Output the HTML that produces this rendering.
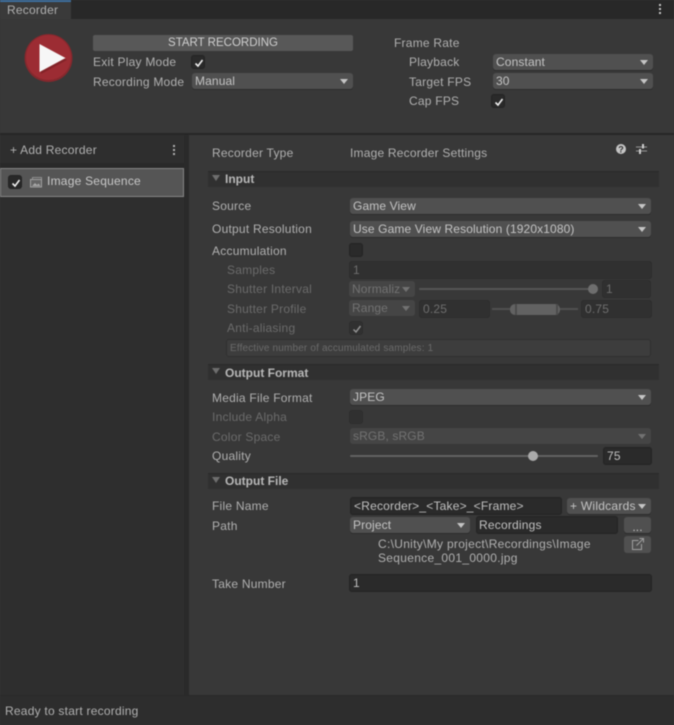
<!DOCTYPE html>
<html><head><meta charset="utf-8"><style>
*{box-sizing:border-box}
html,body{margin:0;padding:0;background:#383838}
#r{position:relative;width:674px;height:725px;overflow:hidden;background:#383838;font:12px "Liberation Sans",sans-serif;color:#b0b0b0;filter:blur(.4px)}
#r div,#r svg{position:absolute}
.t{white-space:nowrap;height:16px;line-height:16px;letter-spacing:.23px}
.d{color:#6b6b6b}
.dd{background:#505050;border-radius:3px;box-shadow:0 1px 0 #2c2c2c;height:16px;color:#c4c4c4;line-height:16px;padding-left:3px;letter-spacing:.12px;white-space:nowrap}
.dd:after{content:"";position:absolute;right:5px;top:6px;border:4px solid transparent;border-top:5px solid #c4c4c4;border-bottom:0}
.na:after{display:none}
.dis{background:#454545;color:#727272;box-shadow:none}
.dis:after{border-top-color:#727272}
.f{background:#2a2a2a;border:1px solid #232323;border-radius:3px;height:18px;line-height:17px;padding-left:3px;color:#c0c0c0;letter-spacing:.2px;white-space:nowrap}
.fd{background:#303030;border-color:#2d2d2d;color:#6e6e6e}
.c{width:14px;height:14px;background:#2a2a2a;border:1px solid #232323;border-radius:3px}
.cd{background:#303030;border-color:#2e2e2e}
.c svg{left:1px;top:1px}
.h{left:208px;width:451px;height:16px;background:#303030;border-top:1px solid #2a2a2a}
.b{font-weight:bold;color:#b8b8b8;letter-spacing:0}
.tri{width:0;height:0;border:4px solid transparent;border-top:6px solid #6e6e6e;border-bottom:0}
</style></head><body><div id="r">
<div style="left:0;top:0;width:674px;height:19px;background:#282828"></div>
<div style="left:0;top:0;width:71px;height:19px;background:#3a3a3a"></div>
<div style="left:0;top:0;width:71px;height:2px;background:#3d6f9f"></div>
<div class="t" style="left:7px;top:2px">Recorder</div>
<svg style="left:658px;top:3px" width="5" height="12"><g fill="#c4c4c4"><rect x="1" y="1" width="2" height="2"/><rect x="1" y="5" width="2" height="2"/><rect x="1" y="9" width="2" height="2"/></g></svg>

<svg style="left:20px;top:30px" width="56" height="56">
<circle cx="28.5" cy="28" r="24" fill="#85282d"/><circle cx="28.500" cy="27.500" r="22.500" fill="#9c2c33"/>
<path d="M21 16L47 30L21 44Z" fill="#7a1f24" opacity=".7"/><path d="M19.500 14L45.500 28L19.500 42Z" fill="#f6f6f6"/></svg>

<div style="left:93px;top:35px;width:260px;height:16px;background:#585858;border-radius:2px;color:#cfcfcf;text-align:center;line-height:17px;font-size:11.5px">START RECORDING</div>
<div class="t" style="left:93px;top:54px">Exit Play Mode</div>
<div class="c" style="left:191px;top:55px"><svg width="12" height="12"><path d="M2.500 6.500L5 9L9.500 3" stroke="#eee" stroke-width="1.600" fill="none"/></svg></div>
<div class="t" style="left:93px;top:74px">Recording Mode</div>
<div class="dd" style="left:192px;top:73px;width:161px">Manual</div>
<div class="t" style="left:394px;top:35px">Frame Rate</div>
<div class="t" style="left:409px;top:54px">Playback</div>
<div class="dd" style="left:493px;top:54px;width:160px">Constant</div>
<div class="t" style="left:409px;top:74px">Target FPS</div>
<div class="dd" style="left:493px;top:73px;width:160px">30</div>
<div class="t" style="left:409px;top:93px">Cap FPS</div>
<div class="c" style="left:491px;top:94px"><svg width="12" height="12"><path d="M2.500 6.500L5 9L9.500 3" stroke="#eee" stroke-width="1.600" fill="none"/></svg></div>

<div style="left:0;top:133px;width:674px;height:2px;background:#262626"></div>
<div style="left:0;top:135px;width:189px;height:562px;background:#2e2e2e"></div>
<div style="left:184px;top:135px;width:5px;height:562px;background:#2a2a2a"></div>
<div style="left:0;top:163px;width:184px;height:5px;background:#292929"></div>
<div class="t" style="left:10px;top:142px">+ Add Recorder</div>
<svg style="left:172px;top:144px" width="5" height="12"><g fill="#b0b0b0"><rect x="1" y="1" width="2" height="2"/><rect x="1" y="5" width="2" height="2"/><rect x="1" y="9" width="2" height="2"/></g></svg>
<div style="left:0;top:168px;width:184px;height:29px;background:#555;border:1px solid #858585"></div>
<div class="c" style="left:8px;top:175px;background:#282828"><svg width="12" height="12"><path d="M2.500 6.500L5 9L9.500 3" stroke="#eee" stroke-width="1.600" fill="none"/></svg></div>
<svg style="left:30px;top:176px" width="13" height="12"><rect x="2.500" y="1.500" width="9" height="7" fill="none" stroke="#909090"/><rect x=".5" y="3.500" width="11" height="7.500" fill="#666" stroke="#a0a0a0"/><path d="M2 10L5 7L7 9L8.500 7.500L10.500 10Z" fill="#a8a8a8"/></svg>
<div class="t" style="left:47px;top:173px;color:#c8c8c8">Image Sequence</div>

<div class="t" style="left:212px;top:145px">Recorder Type</div>
<div class="t" style="left:350px;top:145px;letter-spacing:.2px">Image Recorder Settings</div>
<svg style="left:615px;top:143px" width="12" height="12"><circle cx="6" cy="6" r="5" fill="#c4c4c4"/><text x="6" y="9.500" text-anchor="middle" font-size="9" font-weight="bold" font-family="Liberation Sans" fill="#333">?</text></svg>
<svg style="left:636px;top:143px" width="12" height="12"><path d="M0 4H11M0 8H11" stroke="#999" stroke-width="1"/><rect x="6" y="1" width="2" height="4.500" fill="#ccc"/><rect x="3" y="6" width="2" height="5" fill="#ccc"/></svg>

<div class="h" style="top:171px"></div>
<div class="tri" style="left:212px;top:175px"></div>
<div class="t b" style="left:225px;top:171px">Input</div>

<div class="t" style="left:212px;top:198px">Source</div>
<div class="dd" style="left:350px;top:198px;width:301px">Game View</div>
<div class="t" style="left:212px;top:221px">Output Resolution</div>
<div class="dd" style="left:350px;top:221px;width:301px">Use Game View Resolution (1920x1080)</div>
<div class="t" style="left:212px;top:243px">Accumulation</div>
<div class="c" style="left:349px;top:243px"></div>
<div class="t d" style="left:227px;top:262px">Samples</div>
<div class="f fd" style="left:349px;top:261px;width:303px">1</div>
<div class="t d" style="left:227px;top:281px">Shutter Interval</div>
<div class="dd dis" style="left:349px;top:281px;width:66px;padding-left:3px">Normaliz</div>
<div style="left:419px;top:288px;width:175px;height:2px;background:#555;border-radius:2px"></div>
<div style="left:588px;top:284px;width:10px;height:10px;background:#6e6e6e;border-radius:50%"></div>
<div class="f fd" style="left:602px;top:280px;width:49px">1</div>
<div class="t d" style="left:227px;top:301px">Shutter Profile</div>
<div class="dd dis" style="left:349px;top:300px;width:66px;padding-left:3px">Range</div>
<div class="f fd" style="left:419px;top:300px;width:71px">0.25</div>
<div style="left:492px;top:308px;width:86px;height:2px;background:#505050"></div>
<div style="left:510px;top:304px;width:50px;height:11px;background:#626262;border-radius:5px"></div>
<div style="left:515px;top:304px;width:2px;height:11px;background:#4c4c4c"></div>
<div style="left:556px;top:304px;width:2px;height:11px;background:#4c4c4c"></div>
<div class="f fd" style="left:581px;top:300px;width:71px">0.75</div>
<div class="t d" style="left:227px;top:320px">Anti-aliasing</div>
<div class="c cd" style="left:349px;top:321px"><svg width="12" height="12"><path d="M2.500 6.500L5 9L9.500 3" stroke="#909090" stroke-width="1.500" fill="none"/></svg></div>
<div style="left:226px;top:339px;width:425px;height:18px;background:#3d3d3d;border:1px solid #303030;border-radius:3px;font-size:10px;line-height:17px;padding-left:3px;color:#6a6a6a;letter-spacing:.16px;white-space:nowrap">Effective number of accumulated samples: 1</div>

<div class="h" style="top:364px"></div>
<div class="tri" style="left:212px;top:368px"></div>
<div class="t b" style="left:225px;top:365px">Output Format</div>

<div class="t" style="left:212px;top:390px">Media File Format</div>
<div class="dd" style="left:350px;top:389px;width:301px">JPEG</div>
<div class="t d" style="left:212px;top:409px">Include Alpha</div>
<div class="c cd" style="left:349px;top:410px"></div>
<div class="t d" style="left:212px;top:429px">Color Space</div>
<div class="dd dis" style="left:350px;top:428px;width:301px">sRGB, sRGB</div>
<div class="t" style="left:212px;top:448px">Quality</div>
<div style="left:350px;top:455px;width:248px;height:2px;background:#626262;border-radius:2px"></div>
<div style="left:528px;top:451px;width:10px;height:10px;background:#aaa;border-radius:50%"></div>
<div class="f" style="left:603px;top:447px;width:49px">75</div>

<div class="h" style="top:473px"></div>
<div class="tri" style="left:212px;top:477px"></div>
<div class="t b" style="left:225px;top:473px">Output File</div>

<div class="t" style="left:212px;top:498px">File Name</div>
<div class="f" style="left:350px;top:497px;width:212px;padding-left:3px">&lt;Recorder&gt;_&lt;Take&gt;_&lt;Frame&gt;</div>
<div class="dd" style="left:567px;top:498px;width:84px;padding-left:3px;letter-spacing:.25px">+ Wildcards</div>
<div class="t" style="left:212px;top:518px">Path</div>
<div class="dd" style="left:350px;top:517px;width:120px">Project</div>
<div class="f" style="left:476px;top:516px;width:142px;padding-left:2px">Recordings</div>
<div class="dd na" style="left:624px;top:517px;width:27px;padding:0;text-align:center;line-height:20px;overflow:hidden">...</div>
<div class="t" style="left:378px;top:536px;letter-spacing:.3px">C:\Unity\My project\Recordings\Image</div>
<div class="t" style="left:378px;top:550px;letter-spacing:.3px">Sequence_001_0000.jpg</div>
<div style="left:624px;top:536px;width:27px;height:17px;background:#505050;border-radius:3px"></div>
<svg style="left:631px;top:537px" width="14" height="14"><path d="M7.500 3.500H1.500V12.500H10.500V7" fill="none" stroke="#a0a0a0"/><path d="M5.500 8.500L12 2M8.500 1.500H12.500V5.500" fill="none" stroke="#a0a0a0"/></svg>
<div class="t" style="left:212px;top:576px">Take Number</div>
<div class="f" style="left:349px;top:574px;width:303px">1</div>

<div style="left:0;top:695px;width:674px;height:30px;background:#2d2d2d;border-top:1px solid #292929"></div>
<div class="t" style="left:5px;top:703px">Ready to start recording</div>
</div></body></html>
